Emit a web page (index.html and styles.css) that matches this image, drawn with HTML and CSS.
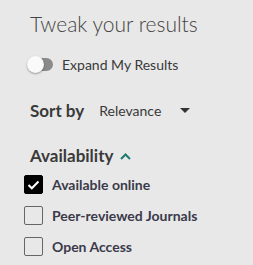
FILE: index.html
```html
<!DOCTYPE html>
<html lang="en">
<head>
    <meta charset="UTF-8">
    <meta name="viewport" content="width=device-width, initial-scale=1.0">
    <title>Tweak your results</title>
    <link rel="stylesheet" href="styles.css">
</head>
<body>
    <aside class="facets">
        <h2 class="facets-title">Tweak your results</h2>
        <label class="toggle-row">
            <span class="toggle"><span class="toggle-knob"></span></span>
            <span class="toggle-label">Expand My Results</span>
        </label>
        <div class="sort-row">
            <span class="sort-title">Sort by</span>
            <span class="sort-value">Relevance</span>
            <span class="sort-arrow"></span>
        </div>
        <div class="facet-group">
            <h3 class="facet-title">
                Availability
                <svg class="chevron" width="11" height="7" viewBox="0 0 11 7">
                    <path d="M1 6 L5.5 1.5 L10 6" fill="none" stroke="#1f7a70" stroke-width="2"/>
                </svg>
            </h3>
            <label class="check-row">
                <span class="check checked">
                    <svg width="13" height="10" viewBox="0 0 13 10">
                        <path d="M1.5 5 L4.8 8.3 L11.5 1.5" fill="none" stroke="#fff" stroke-width="2"/>
                    </svg>
                </span>
                <span class="check-label">Available online</span>
            </label>
            <label class="check-row">
                <span class="check"></span>
                <span class="check-label">Peer-reviewed Journals</span>
            </label>
            <label class="check-row">
                <span class="check"></span>
                <span class="check-label">Open Access</span>
            </label>
        </div>
    </aside>
</body>
</html>
```

FILE: styles.css
```css
body {
    margin: 0;
    padding: 0;
    background-color: #e8e8e8;
    font-family: Lato, "Open Sans", sans-serif;
    color: #3a3a3a;
}
.facets {
    padding: 10px 0 0 30px;
}
.facets-title {
    margin: 0;
    font-size: 21px;
    font-weight: 300;
    color: #444;
    line-height: 28px;
}
.toggle-row {
    display: flex;
    align-items: center;
    margin: 18px 0 0 -2px;
    height: 16px;
}
.toggle {
    position: relative;
    width: 25px;
    height: 13px;
    border-radius: 7px;
    background: #8a8a8a;
}
.toggle-knob {
    position: absolute;
    left: -1px;
    top: -2px;
    width: 17px;
    height: 17px;
    border-radius: 50%;
    background: #fafafa;
    box-shadow: 0 1px 2px rgba(0,0,0,0.35);
}
.toggle-label {
    margin-left: 9px;
    font-size: 14px;
}
.sort-row {
    display: flex;
    align-items: center;
    margin-top: 28px;
    height: 20px;
}
.sort-title {
    font-size: 17px;
    font-weight: bold;
}
.sort-value {
    margin-left: 15px;
    font-size: 14px;
}
.sort-arrow {
    margin-left: 19px;
    width: 0;
    height: 0;
    border-left: 5px solid transparent;
    border-right: 5px solid transparent;
    border-top: 5px solid #333;
}
.facet-group {
    margin-top: 26px;
}
.facet-title {
    margin: 0;
    font-size: 17px;
    font-weight: bold;
    line-height: 20px;
    display: flex;
    align-items: center;
    gap: 7px;
}
.check-row {
    display: flex;
    align-items: center;
    height: 19px;
    margin: 9px 0 0 -6px;
}
.check-row + .check-row {
    margin-top: 12px;
}
.check {
    box-sizing: border-box;
    width: 19px;
    height: 19px;
    border: 1px solid #666;
    border-radius: 2px;
    display: flex;
    align-items: center;
    justify-content: center;
}
.check.checked {
    background: #000;
    border-color: #000;
}
.check-label {
    margin-left: 9px;
    font-size: 14px;
    font-weight: bold;
    color: #3a3a4a;
}
```
